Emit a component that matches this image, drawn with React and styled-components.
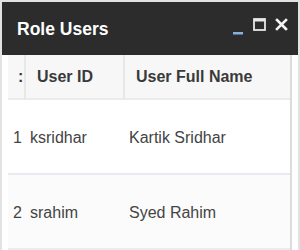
import React from "react";
import styled, { createGlobalStyle } from "styled-components";

const Global = createGlobalStyle`
  html, body { margin: 0; padding: 0; background: #fff; }
  body { font-family: "Liberation Sans", Arial, sans-serif; }
`;

const Window = styled.div`
  box-sizing: border-box;
  width: 300px;
  height: 250px;
  border: 2px solid #e2e2e2;
  border-bottom: none;
  background: #fff;
  display: flex;
  flex-direction: column;
  overflow: hidden;
`;

const TitleBar = styled.div`
  height: 53px;
  flex: none;
  background: #2c2c2c;
  display: flex;
  align-items: center;
  justify-content: space-between;
  padding: 0 10px 0 15px;
`;

const Title = styled.div`
  color: #fff;
  font-weight: bold;
  font-size: 17.5px;
  margin-top: 2px;
`;

const Controls = styled.div`
  display: flex;
  align-items: center;
  margin-top: -8px;
`;

const Ctl = styled.svg`
  display: block;
  margin-left: ${(p) => p.$gap || 0}px;
`;

const Body = styled.div`
  flex: 1;
  display: flex;
  padding: 0 6px;
  min-height: 0;
`;

const Table = styled.div`
  width: 284px;
  border-right: 2px solid #dcdcdc;
  box-sizing: border-box;
  display: grid;
  grid-template-columns: 16px 99px 1fr;
  grid-template-rows: 45px 75px 75px;
  align-content: start;
`;

const HeadCell = styled.div`
  background: #f7f7f7;
  border-bottom: 2px solid #ebebeb;
  border-left: ${(p) => (p.$first ? "none" : "2px solid #e8e8e8")};
  box-sizing: border-box;
  display: flex;
  align-items: center;
  padding-left: ${(p) => p.$pad}px;
  padding-top: 1px;
  font-weight: bold;
  font-size: 16px;
  color: #3a3a3a;
  overflow: hidden;
  white-space: nowrap;
`;

const Cell = styled.div`
  background: ${(p) => (p.$alt ? "#fbfbfb" : "#fff")};
  border-bottom: 2px solid #e8ebef;
  box-sizing: border-box;
  display: flex;
  align-items: center;
  padding-left: ${(p) => p.$pad}px;
  padding-top: 2px;
  font-size: 16px;
  color: #444;
  white-space: nowrap;
  overflow: hidden;
`;

const rows = [
  { n: 1, id: "ksridhar", name: "Kartik Sridhar" },
  { n: 2, id: "srahim", name: "Syed Rahim" },
];

export default function App() {
  return (
    <>
      <Global />
      <Window>
        <TitleBar>
          <Title>Role Users</Title>
          <Controls>
            <Ctl width="12" height="4" viewBox="0 0 12 4" style={{ marginTop: 16 }}>
              <rect x="1" y="1" width="10" height="2.5" fill="#86b1de" />
            </Ctl>
            <Ctl $gap={9} width="13" height="13" viewBox="0 0 13 13">
              <rect x="1" y="1" width="11" height="11" fill="none" stroke="#e8e8e8" strokeWidth="1.8" />
              <rect x="1" y="1" width="11" height="2.5" fill="#e8e8e8" />
            </Ctl>
            <Ctl $gap={9} width="13" height="13" viewBox="0 0 13 13">
              <path d="M2 2 L11 11 M11 2 L2 11" stroke="#f4f4f4" strokeWidth="2.6" strokeLinecap="square" />
            </Ctl>
          </Controls>
        </TitleBar>
        <Body>
          <Table>
            <HeadCell $first $pad={10}>:</HeadCell>
            <HeadCell $pad={11}>User ID</HeadCell>
            <HeadCell $pad={11}>User Full Name</HeadCell>
            {rows.map((r, i) => (
              <React.Fragment key={r.n}>
                <Cell $alt={i % 2 === 1} $pad={5}>{r.n}</Cell>
                <Cell $alt={i % 2 === 1} $pad={6}>{r.id}</Cell>
                <Cell $alt={i % 2 === 1} $pad={6}>{r.name}</Cell>
              </React.Fragment>
            ))}
          </Table>
        </Body>
      </Window>
    </>
  );
}
